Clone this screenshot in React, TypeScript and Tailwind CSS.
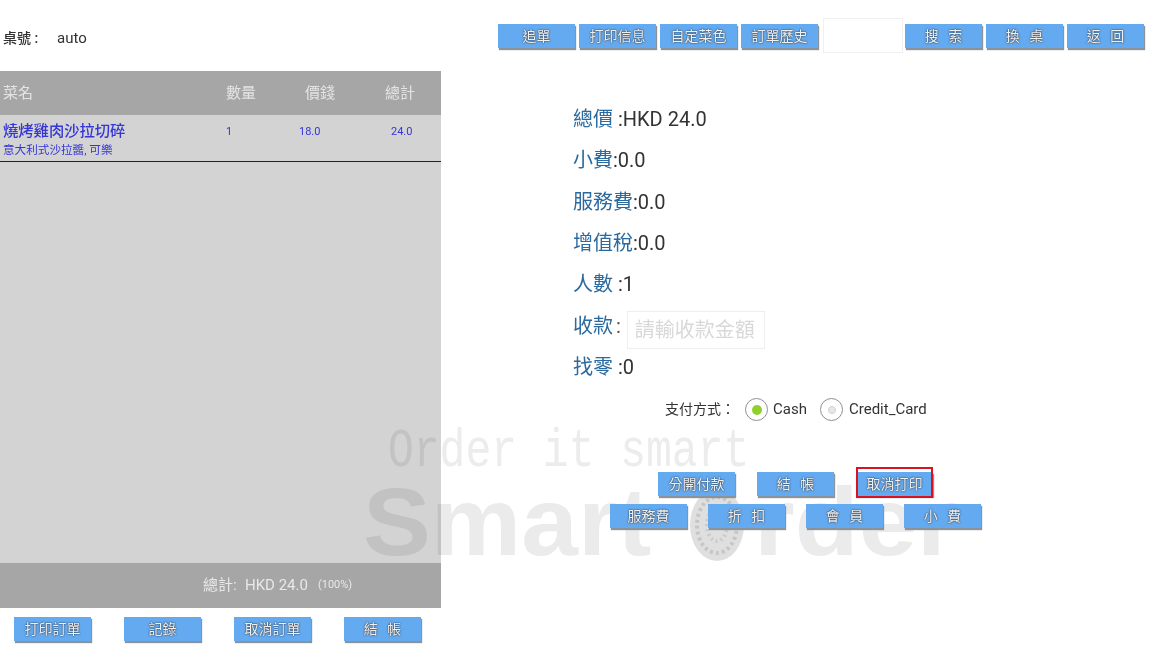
import React from "react";

const font = "font-['Roboto','Noto_Sans_CJK_TC',sans-serif]";

function BlueButton({ label, className = "", selected }: { label: string; className?: string; selected?: boolean }) {
  return (
    <button
      type="button"
      className={`relative h-[24px] w-[77px] shrink-0 bg-[#64aaf0] text-[14px] leading-[24px] text-[#f0f0f0] [word-spacing:6px] [text-shadow:0_0_1px_#2f3a46,0_0_2px_#2f3a46] shadow-[1px_2px_1px_#8a939c] ${className}`}
    >
      {label}
      {selected && <span className="absolute -top-[5px] -bottom-[2px] left-0 right-0 border-2 border-[#d8121f]" />}
    </button>
  );
}

function InfoLine({ label, value }: { label: string; value: string }) {
  return (
    <div className="h-[41.3px] text-[20px] leading-[41px]">
      <span className="text-[#2b6a9e]">{label}</span>
      <span className="text-[#333333]">{value}</span>
    </div>
  );
}

function Radio({ checked }: { checked?: boolean }) {
  return (
    <span className="flex h-[23px] w-[23px] items-center justify-center rounded-full border border-[#8f8f8f] bg-white">
      <span className={checked ? "h-[10px] w-[10px] rounded-full bg-[#8ed12d]" : "h-[8px] w-[8px] rounded-full border border-[#cfcfcf] bg-[#e8e8e8]"} />
    </span>
  );
}

export default function App() {
  return (
    <div className={`relative flex h-[654px] w-[1162px] overflow-hidden bg-white blur-[0.4px] ${font}`}>
      {/* left: current order */}
      <div className="flex w-[441px] shrink-0 flex-col">
        <div className="flex h-[71px] items-center pl-[3px] pt-[5px] text-[#333333]">
          <span className="w-[54px] text-[14px] font-medium">桌號 :</span>
          <span className="text-[15px]">auto</span>
        </div>
        <div className="flex h-[537px] flex-col bg-[#d3d3d3]">
          <div className="flex h-[44px] items-center bg-[#a6a6a6] text-[15px] text-[#e4e4e4]">
            <span className="w-[226px] pl-[3px]">菜名</span>
            <span className="w-[79px]">數量</span>
            <span className="w-[80px]">價錢</span>
            <span>總計</span>
          </div>
          <div className="flex h-[47px] border-b border-[#222222] text-[#3535d8]">
            <div className="w-[226px] pl-[3px] pt-[6px]">
              <div className="text-[15.3px] font-medium leading-[20px]">燒烤雞肉沙拉切碎</div>
              <div className="pt-[2px] text-[11.6px] leading-[14px]">意大利式沙拉醬, 可樂</div>
            </div>
            <span className="w-[73px] pt-[10px] text-[11px] leading-[14px]">1</span>
            <span className="w-[92px] pt-[10px] text-[11px] leading-[14px]">18.0</span>
            <span className="pt-[10px] text-[11px] leading-[14px]">24.0</span>
          </div>
          <div className="flex-1" />
          <div className="flex h-[45px] items-center bg-[#a6a6a6] pl-[203px] text-[#e8e8e8]">
            <span className="w-[42px] text-[15px]">總計:</span>
            <span className="text-[15px]">HKD 24.0</span>
            <span className="ml-[10px] text-[11px]">(100%)</span>
          </div>
        </div>
        <div className="flex gap-[33px] pl-[14px] pt-[9px]">
          <BlueButton label="打印訂單" />
          <BlueButton label="記錄" />
          <BlueButton label="取消訂單" />
          <BlueButton label="結 帳" />
        </div>
      </div>

      {/* right: payment */}
      <div className="relative z-10 flex-1 pt-[18px]">
        <div className="flex h-[36px] items-center gap-[4px] pl-[57px]">
          <BlueButton label="追單" />
          <BlueButton label="打印信息" />
          <BlueButton label="自定菜色" />
          <BlueButton label="訂單歷史" className="mr-[1px]" />
          <div className="mr-[-2px] h-[35px] w-[80px] self-start border border-[#f0f0f0] bg-white" />
          <BlueButton label="搜 索" />
          <BlueButton label="換 桌" />
          <BlueButton label="返 回" />
        </div>

        <div className="pl-[132px] pt-[45px]">
          <InfoLine label="總價" value={"\u00a0:HKD 24.0"} />
          <InfoLine label="小費" value=":0.0" />
          <InfoLine label="服務費" value=":0.0" />
          <InfoLine label="增值稅" value=":0.0" />
          <InfoLine label="人數" value={"\u00a0:1"} />
          <div className="flex h-[41.3px] items-center text-[20px]">
            <span className="text-[#2b6a9e]">收款</span>
            <span className="ml-[3px] text-[#555555]">:</span>
            <div className="ml-[6px] mt-[8px] flex h-[38px] w-[138px] shrink-0 items-center border border-[#eeeeee] pl-[7px] text-[20px] text-[#d8d8d8]">
              請輸收款金額
            </div>
          </div>
          <InfoLine label="找零" value={"\u00a0:0"} />
        </div>

        <div className="flex items-center pl-[224px] pt-[10px] text-[14px] text-[#333333]">
          <span className="w-[80px]">支付方式：</span>
          <Radio checked />
          <span className="ml-[5px] w-[47px] text-[15px]">Cash</span>
          <Radio />
          <span className="ml-[6px] text-[15px]">Credit_Card</span>
        </div>

        <div className="flex items-center gap-[22px] pl-[217px] pt-[51px]">
          <BlueButton label="分開付款" />
          <BlueButton label="結 帳" />
          <BlueButton label="取消打印" selected />
        </div>
        <div className="flex gap-[21px] pl-[169px] pt-[8px]">
          <BlueButton label="服務費" />
          <BlueButton label="折 扣" />
          <BlueButton label="會 員" />
          <BlueButton label="小 費" />
        </div>
      </div>

      {/* watermark sits over both panels */}
      <div className="pointer-events-none absolute left-[388px] top-[424px] origin-center scale-y-[1.25] font-['Liberation_Mono',monospace] text-[43px] leading-[56px] text-[#ececec] mix-blend-multiply">
        Order it smart
      </div>
      <div className="pointer-events-none absolute left-[363px] top-[474px] flex items-center font-['Liberation_Sans',sans-serif] text-[96px] font-bold leading-[96px] text-[#ebebeb] mix-blend-multiply">
        <span className="origin-left scale-x-[1.06]">Smart</span>
        <svg width="56" height="74" viewBox="0 0 56 74" className="ml-[54px] mr-[9px] mt-[6px]">
          <ellipse cx="28" cy="37" rx="27" ry="36" fill="#dfdfdf" />
          <ellipse cx="28" cy="37" rx="20" ry="28" fill="none" stroke="#c6c6c6" strokeWidth="4" strokeDasharray="3 3" />
          <ellipse cx="28" cy="37" rx="10" ry="16" fill="none" stroke="#cacaca" strokeWidth="4" strokeDasharray="2 3" />
        </svg>
        <span className="origin-left scale-x-[1.09]">rder</span>
      </div>
    </div>
  );
}
